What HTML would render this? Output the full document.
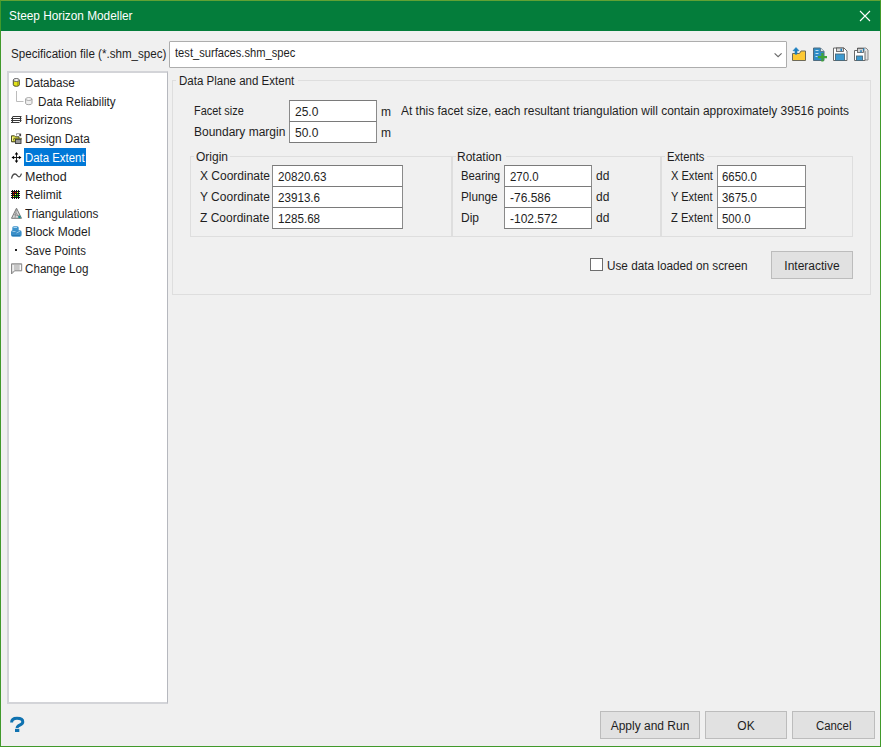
<!DOCTYPE html>
<html><head><meta charset="utf-8">
<style>
*{margin:0;padding:0;box-sizing:border-box}
html,body{width:881px;height:747px;overflow:hidden;background:#f0f0f0}
body{position:relative;font-family:"Liberation Sans",sans-serif;font-size:12px;color:#1e1e1e}
.a{position:absolute}
.t{position:absolute;white-space:nowrap;line-height:12px}
.win{position:absolute;left:0;top:0;width:881px;height:747px;border:1px solid #41992b;border-top-color:#62a234}
.title{position:absolute;left:1px;top:1px;width:879px;height:30px;background:#047d3b}
.inp{position:absolute;background:#fff;border:1px solid #7a7a7a;border-left-color:#8a8a8a;border-right-color:#8a8a8a}
.grp{position:absolute;border:1px solid #dedede}
.btn{position:absolute;background:#e1e1e1;border:1px solid #bcbcbc;text-align:center;line-height:28px}
</style></head><body>
<div class="win"></div>
<div class="title"></div>
<div class="t" style="left:9px;top:10px;color:#fff;transform:scaleX(0.985);transform-origin:0 0">Steep Horizon Modeller</div>
<!-- close X -->
<svg class="a" style="left:859px;top:10px" width="12" height="12" viewBox="0 0 12 12"><path d="M1 1L11 11M11 1L1 11" stroke="#fff" stroke-width="1.1"/></svg>

<!-- spec row -->
<div class="t" style="left:11px;top:48px;transform:scaleX(0.967);transform-origin:0 0">Specification file (*.shm_spec)</div>
<div class="inp" style="left:169px;top:41px;width:618px;height:27px;border-color:#adadad;border-radius:1px"></div>
<div class="t" style="left:175px;top:47px;transform:scaleX(0.93);transform-origin:0 0">test_surfaces.shm_spec</div>

<!-- tree -->
<div class="a" style="left:7px;top:71px;width:161px;height:633px;background:#fff;border:2px solid #d3d4d8;border-right:1px solid #b6b8be"></div>
<div class="a" style="left:24px;top:148px;width:62px;height:18px;background:#0078d7"></div>
<div class="t" style="left:25px;top:77px;transform:scaleX(0.97);transform-origin:0 0">Database</div>
<div class="t" style="left:38px;top:96px;transform:scaleX(0.97);transform-origin:0 0">Data Reliability</div>
<div class="t" style="left:25px;top:114px">Horizons</div>
<div class="t" style="left:25px;top:133px;transform:scaleX(0.98);transform-origin:0 0">Design Data</div>
<div class="t" style="left:25px;top:152px;color:#fff;transform:scaleX(0.95);transform-origin:0 0">Data Extent</div>
<div class="t" style="left:25px;top:171px;transform:scaleX(1.04);transform-origin:0 0">Method</div>
<div class="t" style="left:25px;top:189px">Relimit</div>
<div class="t" style="left:25px;top:208px;transform:scaleX(0.98);transform-origin:0 0">Triangulations</div>
<div class="t" style="left:25px;top:226px">Block Model</div>
<div class="t" style="left:25px;top:245px;transform:scaleX(0.95);transform-origin:0 0">Save Points</div>
<div class="t" style="left:25px;top:263px;transform:scaleX(0.97);transform-origin:0 0">Change Log</div>

<!-- main group -->
<div class="grp" style="left:172px;top:80px;width:699px;height:215px"></div>
<div class="a" style="left:176px;top:74px;width:122px;height:12px;background:#f0f0f0"></div>
<div class="t" style="left:179px;top:75px;transform:scaleX(0.96);transform-origin:0 0">Data Plane and Extent</div>

<div class="t" style="left:194px;top:105px;transform:scaleX(0.91);transform-origin:0 0">Facet size</div>
<div class="t" style="left:194px;top:126px">Boundary margin</div>
<div class="inp" style="left:289px;top:100px;width:88px;height:22px"></div>
<div class="inp" style="left:289px;top:121px;width:88px;height:22px"></div>
<div class="t" style="left:295px;top:106px">25.0</div>
<div class="t" style="left:295px;top:127px">50.0</div>
<div class="t" style="left:381px;top:106px">m</div>
<div class="t" style="left:381px;top:127px">m</div>
<div class="t" style="left:401px;top:105px;transform:scaleX(0.995);transform-origin:0 0">At this facet size, each resultant triangulation will contain approximately 39516 points</div>

<!-- origin group -->
<div class="grp" style="left:190px;top:156px;width:262px;height:81px"></div>
<div class="a" style="left:194px;top:150px;width:36px;height:12px;background:#f0f0f0"></div>
<div class="t" style="left:196px;top:151px">Origin</div>
<div class="t" style="left:200px;top:170px">X Coordinate</div>
<div class="t" style="left:200px;top:191px">Y Coordinate</div>
<div class="t" style="left:200px;top:212px">Z Coordinate</div>
<div class="inp" style="left:272px;top:165px;width:131px;height:22px"></div>
<div class="inp" style="left:272px;top:186px;width:131px;height:22px"></div>
<div class="inp" style="left:272px;top:207px;width:131px;height:22px"></div>
<div class="t" style="left:278px;top:171px;transform:scaleX(0.97);transform-origin:0 0">20820.63</div>
<div class="t" style="left:278px;top:192px;transform:scaleX(0.97);transform-origin:0 0">23913.6</div>
<div class="t" style="left:278px;top:213px;transform:scaleX(0.97);transform-origin:0 0">1285.68</div>

<!-- rotation group -->
<div class="grp" style="left:452px;top:156px;width:209px;height:81px"></div>
<div class="a" style="left:456px;top:150px;width:50px;height:12px;background:#f0f0f0"></div>
<div class="t" style="left:457px;top:151px">Rotation</div>
<div class="t" style="left:461px;top:170px;transform:scaleX(0.945);transform-origin:0 0">Bearing</div>
<div class="t" style="left:461px;top:191px;transform:scaleX(0.98);transform-origin:0 0">Plunge</div>
<div class="t" style="left:461px;top:212px">Dip</div>
<div class="inp" style="left:504px;top:165px;width:88px;height:22px"></div>
<div class="inp" style="left:504px;top:186px;width:88px;height:22px"></div>
<div class="inp" style="left:504px;top:207px;width:88px;height:22px"></div>
<div class="t" style="left:510px;top:171px;transform:scaleX(0.95);transform-origin:0 0">270.0</div>
<div class="t" style="left:510px;top:192px">-76.586</div>
<div class="t" style="left:510px;top:213px">-102.572</div>
<div class="t" style="left:596px;top:170px">dd</div>
<div class="t" style="left:596px;top:191px">dd</div>
<div class="t" style="left:596px;top:212px">dd</div>

<!-- extents group -->
<div class="grp" style="left:661px;top:156px;width:192px;height:81px"></div>
<div class="a" style="left:665px;top:150px;width:42px;height:12px;background:#f0f0f0"></div>
<div class="t" style="left:667px;top:151px;transform:scaleX(0.936);transform-origin:0 0">Extents</div>
<div class="t" style="left:671px;top:170px;transform:scaleX(0.924);transform-origin:0 0">X Extent</div>
<div class="t" style="left:671px;top:191px;transform:scaleX(0.92);transform-origin:0 0">Y Extent</div>
<div class="t" style="left:671px;top:212px;transform:scaleX(0.93);transform-origin:0 0">Z Extent</div>
<div class="inp" style="left:717px;top:165px;width:89px;height:22px"></div>
<div class="inp" style="left:717px;top:186px;width:89px;height:22px"></div>
<div class="inp" style="left:717px;top:207px;width:89px;height:22px"></div>
<div class="t" style="left:722px;top:171px;transform:scaleX(0.95);transform-origin:0 0">6650.0</div>
<div class="t" style="left:722px;top:192px;transform:scaleX(0.95);transform-origin:0 0">3675.0</div>
<div class="t" style="left:722px;top:213px;transform:scaleX(0.95);transform-origin:0 0">500.0</div>

<!-- checkbox -->
<div class="a" style="left:590px;top:258px;width:13px;height:13px;background:#fff;border:1px solid #6e6e6e"></div>
<div class="t" style="left:607px;top:260px;transform:scaleX(0.98);transform-origin:0 0">Use data loaded on screen</div>
<div class="btn" style="left:771px;top:251px;width:82px;height:28px">Interactive</div>


<!-- bottom buttons -->
<div class="btn" style="left:600px;top:711px;width:100px;height:28px">Apply and Run</div>
<div class="btn" style="left:705px;top:711px;width:82px;height:28px">OK</div>
<div class="btn" style="left:792px;top:711px;width:83px;height:28px"><span style="display:inline-block;transform:scaleX(0.95);margin-left:1px">Cancel</span></div>
<svg class="a" style="left:0;top:0" width="881" height="747" viewBox="0 0 881 747">
<!-- combo chevron -->
<path d="M774.6 53.4L778.1 56.6L781.6 53.4" fill="none" stroke="#6a6a6a" stroke-width="1.2"/>
<!-- folder open -->
<path d="M792.5 53.5h7l1.5-2.5h4.5v9.5h-13z" fill="#fdc934" stroke="#6e6a58" stroke-width="1"/>
<path d="M796 47.5l-3 3.2h2v3.5h2v-3.5h2z" fill="#1d7fbf" stroke="#1d7fbf" stroke-width="0.6"/>
<!-- new doc plus -->
<path d="M813.5 48h7l3.5 3.5v9h-10.5z" fill="#2f8dc6" stroke="#4f6c80" stroke-width="1"/>
<path d="M820.5 48v3.5h3.5" fill="#e8e8e8" stroke="#4f6c80" stroke-width="0.8"/>
<path d="M815.5 50.5h3M815.5 53.5h3M815.5 56.5h2" stroke="#bfe0f3" stroke-width="1"/>
<path d="M818 57.2h9M822.4 53v8.6" stroke="#3fa33a" stroke-width="2.2"/>
<!-- save -->
<path d="M833.5 48h10.5l3 3v9.5h-13.5z" fill="#fff" stroke="#6a6a6a" stroke-width="1"/>
<rect x="836.5" y="48" width="7" height="3.5" fill="#d8d8d8" stroke="#555" stroke-width="0.8"/>
<rect x="840.5" y="48.6" width="1.5" height="2.6" fill="#1a7fc0"/>
<rect x="835.5" y="54" width="9" height="6.5" fill="#3d9ad0" stroke="#4a6878" stroke-width="0.9"/>
<!-- save as -->
<path d="M857.5 48h8.5l2 2v10h-10.5z" fill="#e4e4e4" stroke="#8a8a8a" stroke-width="1"/>
<path d="M854.5 50.5h9.5l1 1v9h-10.5z" fill="#fff" stroke="#6a6a6a" stroke-width="1"/>
<rect x="857.5" y="48.5" width="6" height="4" fill="#d0d0d0" stroke="#555" stroke-width="0.8"/>
<rect x="860.3" y="50.2" width="1.4" height="2.2" fill="#1a7fc0"/>
<rect x="863" y="48.5" width="1.4" height="1.8" fill="#1a7fc0"/>
<rect x="856.5" y="56" width="6" height="4.5" fill="#3d9ad0" stroke="#4a6878" stroke-width="0.9"/>

<!-- tree: database -->
<path d="M13.3 80v4.8a3 1.5 0 0 0 6 0V80" fill="#e4e41a" stroke="#3c3c28" stroke-width="0.9"/>
<path d="M17.8 81v4.5" stroke="#9a9a10" stroke-width="1"/>
<ellipse cx="16.3" cy="80" rx="3" ry="1.5" fill="#f6f6f6" stroke="#555" stroke-width="0.9"/>
<!-- connector -->
<path d="M16.5 91v10.5h7" fill="none" stroke="#b4b4b4" stroke-width="0.9"/>
<!-- grey cylinder -->
<path d="M25.6 99v4.3a3.2 1.4 0 0 0 6.4 0V99" fill="#f0f0f0" stroke="#9a9a9a" stroke-width="0.9"/>
<ellipse cx="28.8" cy="99" rx="3.2" ry="1.4" fill="#fff" stroke="#9a9a9a" stroke-width="0.9"/>
<!-- horizons -->
<g stroke="#3a3a3a" stroke-width="1.1" fill="none">
<path d="M13 116.5h8.5M11 118.5h10.5M11 120.5h10.5M11 122.5h8.5M12.5 116.5v6M20.5 116.5v5.5"/>
</g>
<!-- design data -->
<path d="M11.5 135.8h3l1 1h3.5v5h-7.5z" fill="#e8e850" stroke="#3a3a18" stroke-width="0.9"/>
<path d="M12.2 141.6l1.8-3.3h7.5l-1.8 3.3z" fill="#cfcf3a" stroke="#4a4a20" stroke-width="0.7"/>
<path d="M12.5 137v4" stroke="#f6f690" stroke-width="1"/>
<rect x="15.5" y="139.3" width="5.5" height="4.2" fill="#9a9a9a" stroke="#3a3a3a" stroke-width="0.9"/>
<path d="M16.5 135.5v-1.8h3" fill="none" stroke="#8a8a8a" stroke-width="0.9"/>
<rect x="19.3" y="133.6" width="1.8" height="2.6" fill="#444"/>
<!-- data extent move -->
<g fill="#000">
<path d="M16.5 153.5v8M12.5 157.5h8" stroke="#222" stroke-width="1"/>
<path d="M16.5 152l-1.8 2.6h3.6z M16.5 163l-1.8-2.6h3.6z M11.5 157.5l2.6-1.8v3.6z M21.5 157.5l-2.6-1.8v3.6z"/>
</g>
<!-- method -->
<path d="M11.5 178.6C12.2 175.5 13.5 174 15 174C17 174 17.5 176.8 19 176.8C20.3 176.8 21 175 21.5 173.6" fill="none" stroke="#4a4a4a" stroke-width="1.3"/>
<!-- relimit -->
<g shape-rendering="crispEdges">
<rect x="12" y="190" width="1" height="9" fill="#111"/><rect x="14" y="190" width="1" height="9" fill="#111"/>
<rect x="16" y="190" width="1" height="9" fill="#111"/><rect x="18" y="190" width="1" height="9" fill="#111"/>
<rect x="11" y="191" width="9" height="1" fill="#111"/><rect x="11" y="193" width="9" height="1" fill="#111"/>
<rect x="11" y="195" width="9" height="1" fill="#111"/><rect x="11" y="197" width="9" height="1" fill="#111"/>
<rect x="13" y="192" width="1" height="1" fill="#f00"/><rect x="15" y="192" width="1" height="1" fill="#f00"/><rect x="17" y="192" width="1" height="1" fill="#ff0"/>
<rect x="13" y="194" width="1" height="1" fill="#f00"/><rect x="15" y="194" width="1" height="1" fill="#ff0"/><rect x="17" y="194" width="1" height="1" fill="#0f0"/>
<rect x="13" y="196" width="1" height="1" fill="#ff0"/><rect x="15" y="196" width="1" height="1" fill="#0f0"/><rect x="17" y="196" width="1" height="1" fill="#0f0"/>
</g>
<!-- triangulations -->
<path d="M16.5 208.2L11.5 218.3h10z" fill="#d8d8d8" stroke="#777" stroke-width="1"/>
<path d="M16.5 208.5L15 218M13.5 214.5L20 216M16 212.5l3 5" fill="none" stroke="#888" stroke-width="0.8"/>
<circle cx="19.5" cy="217" r="1.3" fill="#17908f"/>
<!-- block model -->
<rect x="12.3" y="226.2" width="6.4" height="5.6" rx="1.6" fill="#3c93cc"/>
<rect x="11" y="230.2" width="10.6" height="6.6" rx="1.8" fill="#3a8fc9"/>
<path d="M13.5 227.5h3.5" stroke="#a8d2ee" stroke-width="1"/>
<path d="M12.5 231.5h3M16.5 233l3.5-1.8" stroke="#9ccbe8" stroke-width="0.9"/>
<path d="M12 235.5h8" stroke="#2478b2" stroke-width="1"/>
<!-- save points -->
<rect x="15" y="249" width="2" height="2" fill="#222"/>
<!-- change log -->
<path d="M11.5 263.8h10.2v7h-7l-3.2 3.2z" fill="#c8c8c8" stroke="#8a8a8a" stroke-width="1"/>
<rect x="12.5" y="265" width="1.2" height="6" fill="#fff"/>
<rect x="19.7" y="265" width="1.2" height="5" fill="#fff"/>
<!-- help -->
<path d="M11.6 722.4C11.6 719.4 14 718.3 17 718.3C20.3 718.3 22.8 719.4 22.8 721.9C22.8 724.2 20 724.8 18.2 726C17.3 726.6 17.1 727.1 17.1 728.1" fill="none" stroke="#0f72b0" stroke-width="3"/>
<rect x="15" y="728.8" width="4.3" height="3.2" fill="#0f72b0"/>
</svg>
</body></html>
